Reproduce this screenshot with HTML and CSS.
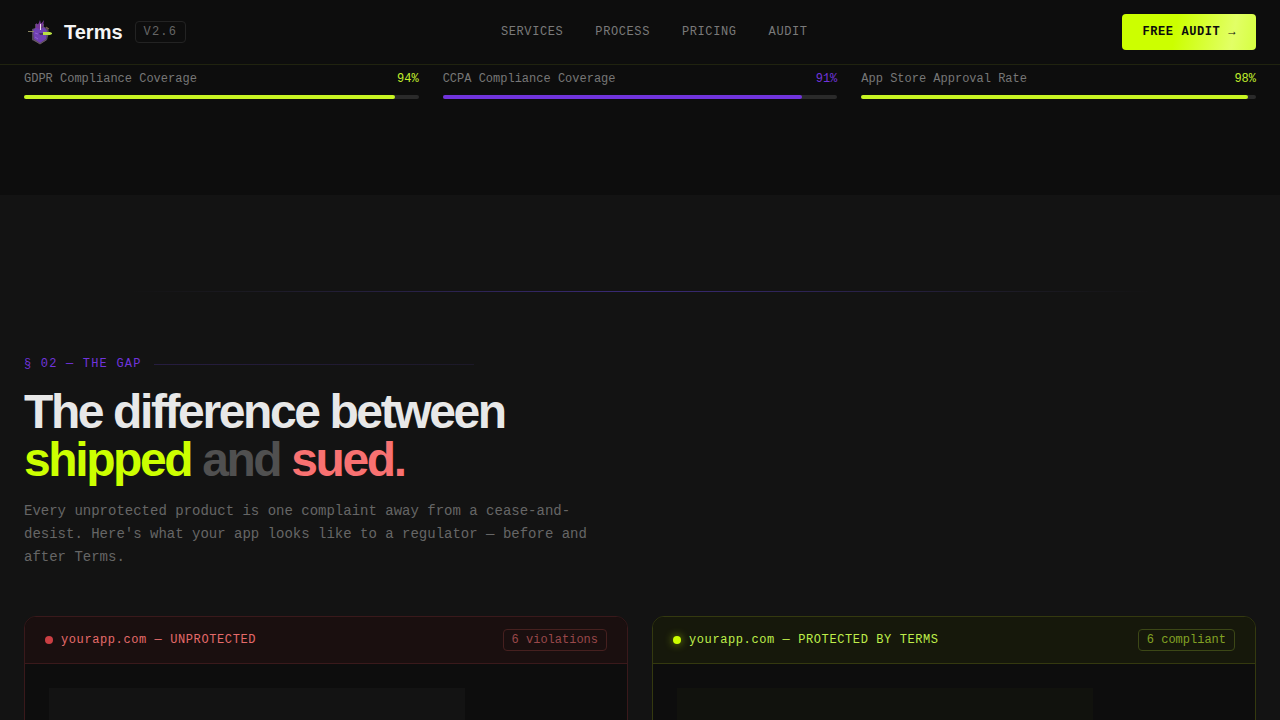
FILE: index.html
```html
<!DOCTYPE html>
<html lang="en">
<head>
<meta charset="utf-8">
<meta name="viewport" content="width=device-width, initial-scale=1">
<title>Terms</title>
<link rel="stylesheet" href="styles.css">
</head>
<body>
<header class="nav">
  <div class="brand">
    <svg class="logo" viewBox="0 0 32 32" aria-hidden="true">
      <path d="M8 13l3-1v-4h3l2-1 4 1v3l4 1 1 5-2 7-7 4-8-4z" fill="#554a5c"/>
      <path d="M9 14l4-3 3 2 4-2 3 4-1 8-6 4-6-4z" fill="#7040b4"/>
      <path d="M12 12v-5l2 2 2-5 1 4 3-4-1 6-3 3z" fill="#76379a"/>
      <path d="M16 8h1v6h-1z" fill="#f1deed"/>
      <path d="M4 15h6v1h-6z" fill="#8b8660"/>
      <path d="M22 11l3 2" stroke="#8a6f45" fill="none"/>
      <path d="M11 17l3 1M11 21l3 2" stroke="#9361d3" fill="none"/>
      <path d="M10 24l6 4 6-4" stroke="#6d5a64" fill="none"/>
      <path d="M15 17h4v2h-3z" fill="#4a3068"/>
      <path d="M19 16h7l2 1v1l-2 1h-7z" fill="#b9df43"/>
    </svg>
    <span class="brand-name">Terms</span>
    <span class="version">V2.6</span>
  </div>
  <nav class="links">
    <a href="#services">SERVICES</a>
    <a href="#process">PROCESS</a>
    <a href="#pricing">PRICING</a>
    <a href="#audit">AUDIT</a>
  </nav>
  <a class="cta" href="#audit">FREE AUDIT →</a>
</header>
<main>
  <section class="stats">
    <div class="stat">
      <div class="stat-row"><span>GDPR Compliance Coverage</span><span class="lime">94%</span></div>
      <div class="track"><div class="fill" style="width:94%"></div></div>
    </div>
    <div class="stat">
      <div class="stat-row"><span>CCPA Compliance Coverage</span><span class="violet">91%</span></div>
      <div class="track"><div class="fill fill-violet" style="width:91%"></div></div>
    </div>
    <div class="stat">
      <div class="stat-row"><span>App Store Approval Rate</span><span class="lime">98%</span></div>
      <div class="track"><div class="fill" style="width:98%"></div></div>
    </div>
  </section>
  <section class="gap">
    <div class="divider"></div>
    <div class="intro">
      <div class="eyebrow">§ 02 — THE GAP</div>
      <h2>The difference between<br><span class="lime">shipped</span> <span class="muted">and</span> <span class="coral">sued.</span></h2>
      <p>Every unprotected product is one complaint away from a cease-and-desist. Here's what your app looks like to a regulator — before and after Terms.</p>
    </div>
    <div class="cards">
      <article class="card card-bad">
        <div class="card-head">
          <span class="dot"></span><span class="card-title">yourapp.com — UNPROTECTED</span><span class="badge">6 violations</span>
        </div>
        <div class="card-body"><div class="placeholder"></div></div>
      </article>
      <article class="card card-good">
        <div class="card-head">
          <span class="dot"></span><span class="card-title">yourapp.com — PROTECTED BY TERMS</span><span class="badge">6 compliant</span>
        </div>
        <div class="card-body"><div class="placeholder"></div></div>
      </article>
    </div>
  </section>
</main>
</body>
</html>
```
FILE: styles.css
```css
* { box-sizing: border-box; }
html { scrollbar-width: none; }
body {
  margin: 0;
  background: #0d0d0d;
  color: #e8e8e8;
  font: 12px/16px "Liberation Mono", monospace;
}
a { color: inherit; text-decoration: none; }
.lime { color: #ccff00; }
.violet { color: #7034dc; }
.muted { color: #505050; }
.coral { color: #f87171; }

.nav {
  position: sticky;
  top: 0;
  z-index: 1;
  display: flex;
  align-items: center;
  justify-content: space-between;
  height: 65px;
  padding: 0 24px;
  border-bottom: 1px solid #20230f;
  background: #0d0d0d;
}
.brand { display: flex; align-items: center; }
.logo { width: 32px; height: 32px; margin-right: 8px; }
.brand-name {
  margin-right: 12px;
  color: #f5f5f5;
  font: bold 20px/28px "Liberation Sans", sans-serif;
}
.version {
  padding: 2px 8px;
  border: 1px solid #232323;
  border-radius: 4px;
  color: #666;
  letter-spacing: 0.1em;
}
.links {
  display: flex;
  gap: 32px;
  color: #7a7a7a;
  letter-spacing: 0.05em;
}
.cta {
  padding: 10px 20px;
  border-radius: 4px;
  background: linear-gradient(100deg, #ccff00 0%, #ccff00 40%, #e2ff66 82%, #d6ff40 100%);
  color: #0d0d0d;
  font-weight: bold;
  letter-spacing: 0.05em;
}

.stats {
  display: grid;
  grid-template-columns: repeat(3, 1fr);
  gap: 24px;
  padding: 6px 24px 96px;
}
.stat-row {
  display: flex;
  justify-content: space-between;
  margin-bottom: 8px;
  color: #777;
}
.stat-row .lime { color: #c2ee2c; }
.track { height: 4px; border-radius: 4px; background: #2a2a2a; }
.fill { height: 4px; border-radius: 4px; background: #c8f522; }
.fill-violet { background: #7034dc; }

.gap { padding: 96px 24px; background: #131313; }
.divider {
  height: 1px;
  margin: 0 104px 64px;
  background: linear-gradient(90deg, #131313, #1b1a22 12%, #3a2a78 50%, #1b1a22 88%, #131313);
}
.intro { max-width: 576px; }
.eyebrow {
  display: flex;
  align-items: center;
  gap: 12px;
  margin-bottom: 16px;
  color: #7034dc;
  letter-spacing: 0.1em;
}
.eyebrow::after {
  content: "";
  flex: 1;
  max-width: 320px;
  height: 1px;
  background: linear-gradient(90deg, #261d40, #1c1928);
}
h2 {
  margin: 0 0 16px;
  font: bold 48px/48px "Liberation Sans", sans-serif;
  letter-spacing: -0.05em;
}
.intro p {
  margin: 0;
  color: #666;
  font-size: 14px;
  line-height: 1.625;
}
.cards {
  display: grid;
  grid-template-columns: 1fr 1fr;
  gap: 24px;
  margin-top: 48px;
}
.card {
  overflow: hidden;
  border: 1px solid;
  border-radius: 12px;
  background: #0d0d0d;
}
.card-head {
  display: flex;
  align-items: center;
  padding: 12px 20px;
  border-bottom: 1px solid;
}
.dot { width: 8px; height: 8px; margin-right: 8px; border-radius: 50%; }
.card-title { letter-spacing: 0.05em; }
.badge { margin-left: auto; padding: 2px 8px; border: 1px solid; border-radius: 4px; }
.card-body { padding: 24px; }
.placeholder { width: 75%; height: 180px; }

.card-bad, .card-bad .card-head { border-color: #3a191b; }
.card-bad .card-head { background: #1a0f0f; color: #e56b6b; }
.card-bad .dot { background: #cb3f43; }
.card-bad .badge { border-color: #46201f; color: #99484a; }
.card-bad .placeholder { background: #131313; }
.card-good, .card-good .card-head { border-color: #34390f; }
.card-good .card-head { background: #16180b; color: #bfee4a; }
.card-good .dot { background: #ccff00; box-shadow: 0 0 8px #a0c800cc; }
.card-good .badge { border-color: #3c4716; color: #83a224; }
.card-good .placeholder { background: #11120d; }
```
